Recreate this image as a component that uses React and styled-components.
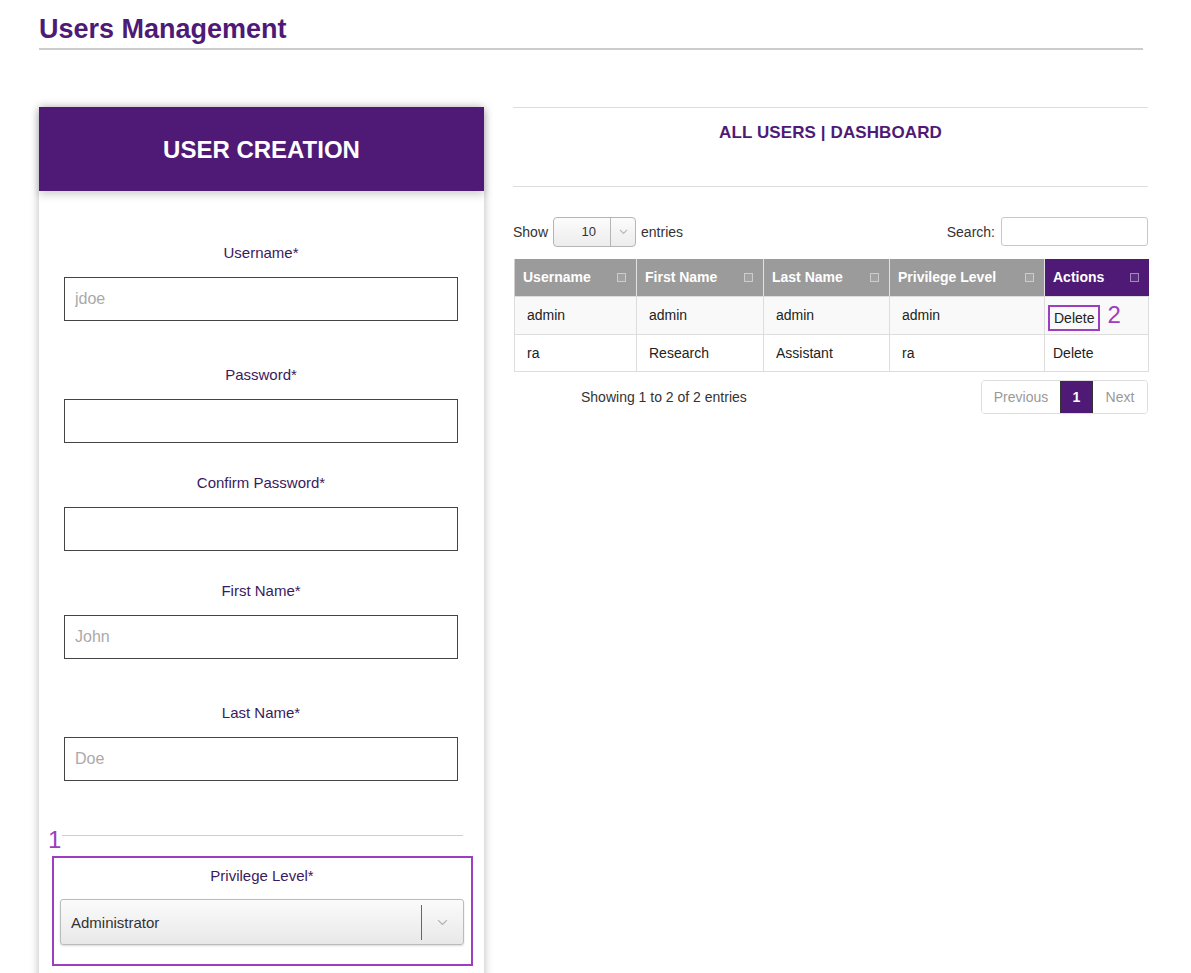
import React from "react";
import styled, { createGlobalStyle } from "styled-components";

const PURPLE = "#4e1a76";
const MARK = "#9d3dbf";

const GlobalStyle = createGlobalStyle`
  body {
    margin: 0;
    background: #fff;
    font-family: "Liberation Sans", Arial, sans-serif;
    color: #333;
  }
`;

const Chevron = ({ size = 10 }) => (
  <svg width={size} height={size * 0.6} viewBox="0 0 10 6">
    <polyline points="1,1 5,5 9,1" fill="none" stroke="#b5b5b5" strokeWidth="1.2" />
  </svg>
);

const users = [
  { username: "admin", first: "admin", last: "admin", level: "admin" },
  { username: "ra", first: "Research", last: "Assistant", level: "ra" },
];

const columns = [
  { label: "Username", width: 122 },
  { label: "First Name", width: 127 },
  { label: "Last Name", width: 126 },
  { label: "Privilege Level", width: 155 },
  { label: "Actions", width: 104, active: true },
];

const App = () => {
  return (
    <Page>
      <GlobalStyle />
      <Title>Users Management</Title>
      <Main>
        <Card>
          <CardHeader>USER CREATION</CardHeader>
          <CardBody>
            <Field>
              <Label>Username*</Label>
              <Input placeholder="jdoe" />
            </Field>
            <Field $gap={45}>
              <Label>Password*</Label>
              <Input type="password" />
            </Field>
            <Field $gap={31}>
              <Label>Confirm Password*</Label>
              <Input type="password" />
            </Field>
            <Field $gap={31}>
              <Label>First Name*</Label>
              <Input placeholder="John" />
            </Field>
            <Field $gap={45}>
              <Label>Last Name*</Label>
              <Input placeholder="Doe" />
            </Field>
            <DividerRow>
              <Mark $side="left">1</Mark>
              <Divider />
            </DividerRow>
            <Highlight>
              <Label>Privilege Level*</Label>
              <BigSelect>
                <span>Administrator</span>
                <SelectArrow>
                  <Chevron size={11} />
                </SelectArrow>
              </BigSelect>
            </Highlight>
          </CardBody>
        </Card>

        <Side>
          <NavBar>
            <NavLink>ALL USERS</NavLink> | <NavLink>DASHBOARD</NavLink>
          </NavBar>
          <Controls>
            <Control>
              Show
              <SmallSelect>
                <span>10</span>
                <SmallArrow>
                  <Chevron size={9} />
                </SmallArrow>
              </SmallSelect>
              entries
            </Control>
            <Control>
              Search:
              <SearchInput />
            </Control>
          </Controls>
          <Table>
            <thead>
              <tr>
                {columns.map((c) => (
                  <Th key={c.label} $active={c.active} style={{ width: c.width }}>
                    <ThInner>
                      {c.label}
                      <SortBox />
                    </ThInner>
                  </Th>
                ))}
              </tr>
            </thead>
            <tbody>
              {users.map((u, i) => (
                <Row key={u.username} $odd={i % 2 === 0}>
                  <Td>{u.username}</Td>
                  <Td>{u.first}</Td>
                  <Td>{u.last}</Td>
                  <Td>{u.level}</Td>
                  <Td $action>
                    {i === 0 ? (
                      <>
                        <DeleteMarked>Delete</DeleteMarked>
                        <Mark>2</Mark>
                      </>
                    ) : (
                      "Delete"
                    )}
                  </Td>
                </Row>
              ))}
            </tbody>
          </Table>
          <Footer>
            <Info>Showing 1 to 2 of 2 entries</Info>
            <Pager>
              <PageBtn $w={78}>Previous</PageBtn>
              <PageBtn $w={33} $current>1</PageBtn>
              <PageBtn $w={54}>Next</PageBtn>
            </Pager>
          </Footer>
        </Side>
      </Main>
    </Page>
  );
};

export default App;

const Page = styled.div`
  width: 1109px;
  padding: 13px 0 0 39px;
`;

const Title = styled.h1`
  margin: 0 5px 0 0;
  font-size: 27px;
  line-height: 33px;
  font-weight: bold;
  color: ${PURPLE};
  padding-bottom: 2px;
  border-bottom: 2px solid #cccccc;
`;

const Main = styled.div`
  display: flex;
  gap: 29px;
  margin-top: 57px;
  align-items: flex-start;
`;

const Card = styled.div`
  width: 445px;
  flex-shrink: 0;
  background: #fff;
  box-shadow: 0 0 9px rgba(0, 0, 0, 0.28);
  min-height: 900px;
`;

const CardHeader = styled.div`
  height: 84px;
  background: ${PURPLE};
  color: #fff;
  font-size: 24px;
  font-weight: bold;
  display: flex;
  align-items: center;
  justify-content: center;
  padding-top: 2px;
  box-sizing: border-box;
  box-shadow: 0 4px 8px rgba(0, 0, 0, 0.18);
  position: relative;
`;

const CardBody = styled.div`
  padding-top: 53px;
`;

const Field = styled.div`
  margin: ${(p) => p.$gap || 0}px 26px 0 25px;
  display: flex;
  flex-direction: column;
`;

const Label = styled.div`
  text-align: center;
  font-size: 15px;
  line-height: 18px;
  color: #3a1a5e;
  margin-bottom: 15px;
`;

const Input = styled.input`
  box-sizing: border-box;
  height: 44px;
  width: 100%;
  border: 1px solid #444;
  padding: 0 10px;
  font-size: 16px;
  font-family: inherit;
  outline: none;
  &::placeholder {
    color: #aaaaaa;
  }
`;

const DividerRow = styled.div`
  position: relative;
  margin: 54px 21px 0 23px;
`;

const Divider = styled.div`
  border-top: 1px solid #cfcfcf;
`;

const Mark = styled.span`
  color: ${MARK};
  font-size: 24px;
  line-height: 24px;
  margin-left: 12px;
  ${(p) =>
    p.$side === "left" &&
    `
    position: absolute;
    left: -14px;
    top: -7px;
    margin: 0;
  `}
`;

const Highlight = styled.div`
  margin: 20px 11px 8px 13px;
  border: 2px solid ${MARK};
  padding: 9px 7px 19px 6px;
  & > div:first-child {
    margin-bottom: 14px;
  }
`;

const BigSelect = styled.div`
  box-sizing: border-box;
  height: 46px;
  border: 1px solid #bbbbbb;
  border-radius: 3px;
  background: linear-gradient(#fbfbfb, #e8e8e8);
  box-shadow: 0 1px 2px rgba(0, 0, 0, 0.15);
  display: flex;
  align-items: center;
  padding-left: 10px;
  font-size: 15px;
  color: #333;
  span {
    flex: 1;
  }
`;

const SelectArrow = styled.div`
  width: 41px;
  height: 35px;
  border-left: 1px solid #666;
  display: flex;
  align-items: center;
  justify-content: center;
`;

const Side = styled.div`
  width: 635px;
  flex-shrink: 0;
`;

const NavBar = styled.div`
  border-top: 1px solid #dddddd;
  border-bottom: 1px solid #dddddd;
  text-align: center;
  padding-top: 15px;
  box-sizing: border-box;
  height: 80px;
  font-size: 17px;
  line-height: 20px;
  font-weight: bold;
  color: ${PURPLE};
  letter-spacing: 0.1px;
`;

const NavLink = styled.span`
  cursor: pointer;
`;

const Controls = styled.div`
  margin-top: 30px;
  display: flex;
  justify-content: space-between;
  align-items: center;
  height: 29px;
  font-size: 14px;
`;

const Control = styled.div`
  display: flex;
  align-items: center;
  color: #333;
`;

const SmallSelect = styled.div`
  box-sizing: border-box;
  width: 83px;
  height: 30px;
  margin: 0 5px 0 5px;
  border: 1px solid #b5b5b5;
  border-radius: 4px;
  background: linear-gradient(#fcfcfc, #ececec);
  display: flex;
  align-items: center;
  font-size: 13px;
  span {
    flex: 1;
    text-align: right;
    padding-right: 14px;
  }
`;

const SmallArrow = styled.div`
  width: 24px;
  height: 100%;
  border-left: 1px solid #b5b5b5;
  display: flex;
  align-items: center;
  justify-content: center;
`;

const SearchInput = styled.input`
  box-sizing: border-box;
  width: 147px;
  height: 29px;
  margin-left: 6px;
  border: 1px solid #c8c8c8;
  border-radius: 3px;
  outline: none;
`;

const Table = styled.table`
  margin-top: 13px;
  margin-left: 1px;
  width: 634px;
  border-collapse: collapse;
  table-layout: fixed;
  font-size: 14px;
`;

const Th = styled.th`
  box-sizing: border-box;
  height: 37px;
  padding: 0 8px;
  background: ${(p) => (p.$active ? PURPLE : "#9b9b9b")};
  color: #fff;
  text-align: left;
  font-weight: bold;
  border-left: 1px solid #e2e2e2;
  border-bottom: 1px solid #dddddd;
  &:first-child {
    border-left: 1px solid #cfcfcf;
  }
`;

const ThInner = styled.div`
  display: flex;
  align-items: center;
  justify-content: space-between;
`;

const SortBox = styled.span`
  width: 7px;
  height: 7px;
  border: 1px solid rgba(255, 255, 255, 0.45);
  background: rgba(255, 255, 255, 0.08);
  margin-right: 2px;
`;

const Row = styled.tr`
  background: ${(p) => (p.$odd ? "#f9f9f9" : "#fff")};
`;

const Td = styled.td`
  height: 37px;
  box-sizing: border-box;
  padding: 0 ${(p) => (p.$action ? "6px 0 8px" : "12px")};
  border: 1px solid #dddddd;
  color: #222;
  white-space: nowrap;
  tr:first-child > & {
    height: 38px;
  }
`;

const DeleteMarked = styled.span`
  outline: 2px solid ${MARK};
  outline-offset: 3px;
  outline-offset: 2px 3px;
  padding: 0 1px;
`;

const Footer = styled.div`
  margin-top: 8px;
  display: flex;
  justify-content: space-between;
  align-items: center;
`;

const Info = styled.div`
  padding-left: 68px;
  font-size: 14px;
  color: #333;
`;

const Pager = styled.div`
  display: flex;
  border: 1px solid #dddddd;
  border-radius: 4px;
  overflow: hidden;
  height: 34px;
  box-sizing: border-box;
`;

const PageBtn = styled.div`
  box-sizing: border-box;
  width: ${(p) => p.$w}px;
  display: flex;
  align-items: center;
  justify-content: center;
  font-size: 14px;
  color: ${(p) => (p.$current ? "#fff" : "#999")};
  background: ${(p) => (p.$current ? PURPLE : "#fff")};
  font-weight: ${(p) => (p.$current ? "bold" : "normal")};
  border-left: ${(p) => (p.$current ? `1px solid #333` : "none")};
  border-right: ${(p) => (p.$current ? `1px solid #333` : "none")};
`;
